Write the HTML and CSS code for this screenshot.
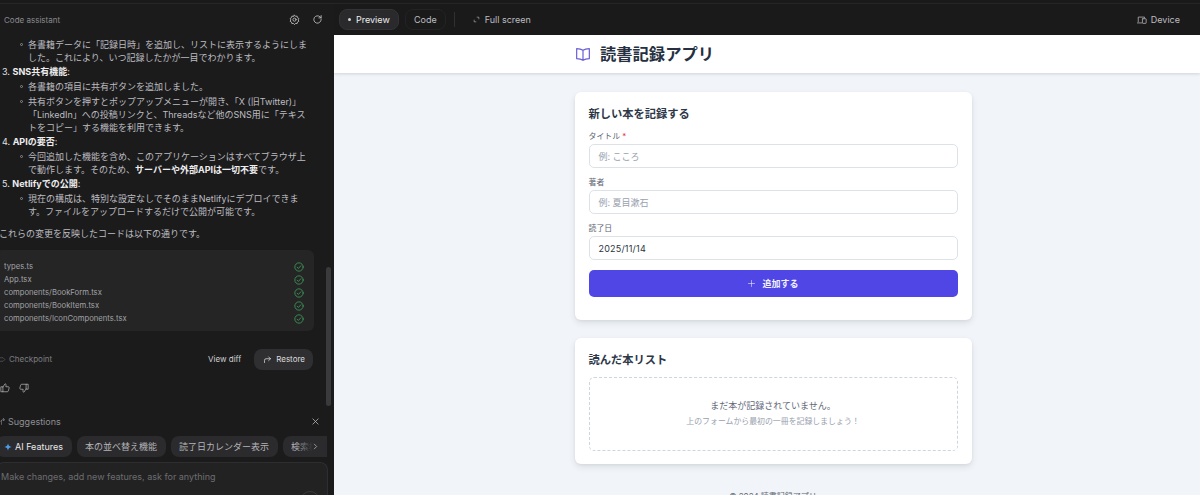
FILE: index.html
```html
<!DOCTYPE html>
<html lang="ja">
<head>
    <meta charset="UTF-8">
    <title>Code assistant</title>
    <link rel="stylesheet" href="styles.css">
</head>
<body>
<div class="app">
    <!-- left side: assistant chat -->
    <aside class="chat">
        <div class="chat-head">
            <span class="chat-title">Code assistant</span>
            <svg class="head-icon gear" viewBox="0 0 24 24"><path d="M12 2.500l2.300 2.600 3.400-.4.800 3.300 3 1.700-1.400 3.100 1.400 3.100-3 1.700-.8 3.300-3.400-.4-2.300 2.600-2.300-2.600-3.400.4-.8-3.300-3-1.700 1.400-3.100-1.400-3.100 3-1.700.8-3.300 3.400.4z"/><circle cx="12" cy="12.300" r="3.500"/></svg>
            <svg class="head-icon" viewBox="0 0 24 24"><path d="M20 12a8 8 0 1 1-2.500-5.800L20 8.500"/><path d="M20 3.500v5h-5"/></svg>
        </div>
        <div class="chat-body">
            <ul class="sub">
                <li>各書籍データに「記録日時」を追加し、リストに表示するようにしました。これにより、いつ記録したかが一目でわかります。</li>
            </ul>
            <p class="step">3. <b>SNS共有機能</b>:</p>
            <ul class="sub">
                <li>各書籍の項目に共有ボタンを追加しました。</li>
                <li>共有ボタンを押すとポップアップメニューが開き、「X (旧Twitter)」「LinkedIn」への投稿リンクと、Threadsなど他のSNS用に「テキストをコピー」する機能を利用できます。</li>
            </ul>
            <p class="step">4. <b>APIの要否</b>:</p>
            <ul class="sub">
                <li>今回追加した機能を含め、このアプリケーションはすべてブラウザ上で動作します。そのため、<b>サーバーや外部APIは一切不要</b>です。</li>
            </ul>
            <p class="step">5. <b>Netlifyでの公開</b>:</p>
            <ul class="sub">
                <li>現在の構成は、特別な設定なしでそのままNetlifyにデプロイできます。ファイルをアップロードするだけで公開が可能です。</li>
            </ul>
            <p class="outro">これらの変更を反映したコードは以下の通りです。</p>
            <div class="files">
                <div class="file"><span>types.ts</span><svg class="check" viewBox="0 0 24 24"><circle cx="12" cy="12" r="10"/><path d="M7.500 12.500l3 3 6-6.500"/></svg></div>
                <div class="file"><span>App.tsx</span><svg class="check" viewBox="0 0 24 24"><circle cx="12" cy="12" r="10"/><path d="M7.500 12.500l3 3 6-6.500"/></svg></div>
                <div class="file"><span>components/BookForm.tsx</span><svg class="check" viewBox="0 0 24 24"><circle cx="12" cy="12" r="10"/><path d="M7.500 12.500l3 3 6-6.500"/></svg></div>
                <div class="file"><span>components/BookItem.tsx</span><svg class="check" viewBox="0 0 24 24"><circle cx="12" cy="12" r="10"/><path d="M7.500 12.500l3 3 6-6.500"/></svg></div>
                <div class="file"><span>components/IconComponents.tsx</span><svg class="check" viewBox="0 0 24 24"><circle cx="12" cy="12" r="10"/><path d="M7.500 12.500l3 3 6-6.500"/></svg></div>
            </div>
            <div class="checkpoint">
                <span class="cp-label"><svg class="cp-icon" viewBox="0 0 24 24"><path d="M2 6h12l6 6-6 6H2"/></svg>Checkpoint</span>
                <span class="view-diff">View diff</span>
                <span class="restore"><svg class="restore-icon" viewBox="0 0 24 24"><path d="M4 20v-6a4 4 0 0 1 4-4h12"/><path d="M15 5l5 5-5 5"/></svg>Restore</span>
            </div>
            <div class="thumbs">
                <svg viewBox="0 0 24 24"><path d="M7 10v11H2V10zM7 10l5-8c2 0 3 1.500 2.500 3.500L14 9h6c1.500 0 2.500 1.500 2 3l-2 7c-.3 1.200-1.200 2-2.500 2H7"/></svg>
                <svg viewBox="0 0 24 24"><path d="M17 14V3h5v11zM17 14l-5 8c-2 0-3-1.500-2.500-3.500L10 15H4c-1.500 0-2.500-1.500-2-3l2-7c.3-1.200 1.200-2 2.500-2H17"/></svg>
            </div>
        </div>
        <div class="suggest-head">
            <svg class="spark" viewBox="0 0 24 24"><path d="M12 8v14M8 12l4-4"/><path d="M19 2l1 3 3 1-3 1-1 3-1-3-3-1 3-1z"/></svg>
            <span>Suggestions</span>
            <svg class="close" viewBox="0 0 24 24"><path d="M5 5l14 14M19 5L5 19"/></svg>
        </div>
        <div class="chips">
            <span class="chip chip-ai"><svg class="diamond" viewBox="0 0 24 24"><path d="M12 1c1 7 4 10 11 11-7 1-10 4-11 11-1-7-4-10-11-11 7-1 10-4 11-11z"/></svg>AI Features</span>
            <span class="chip">本の並べ替え機能</span>
            <span class="chip">読了日カレンダー表示</span>
            <span class="chip">検索機能</span>
            <span class="chips-more"><svg viewBox="0 0 24 24"><path d="M8 4l8 8-8 8"/></svg></span>
        </div>
        <div class="composer">Make changes, add new features, ask for anything<span class="send"></span></div>
    </aside>

    <!-- right side: preview -->
    <main class="stage">
        <div class="toolbar">
            <span class="tab tab-on"><i class="dot"></i>Preview</span>
            <span class="tab">Code</span>
            <span class="bar-sep"></span>
            <span class="fullscreen"><svg viewBox="0 0 24 24"><path d="M4 14v6h6M20 10V4h-6"/></svg>Full screen</span>
            <span class="device"><svg viewBox="0 0 24 24"><path d="M3 16V5h15v2M1 19h10"/><rect x="13" y="9" width="9" height="11" rx="1"/></svg>Device</span>
        </div>
        <div class="preview">
            <header class="site-head">
                <div class="site-inner">
                    <svg class="book" viewBox="0 0 24 24"><path d="M12 6.500C10 5 7 4 2.500 4v15c4.500 0 7.500 1 9.500 2.500 2-1.500 5-2.500 9.500-2.500V4C17 4 14 5 12 6.500zM12 6.500v15"/></svg>
                    <h1>読書記録アプリ</h1>
                </div>
            </header>
            <div class="content">
                <section class="card card-form">
                    <h2>新しい本を記録する</h2>
                    <label class="field-label">タイトル <em>*</em></label>
                    <div class="input ph">例: こころ</div>
                    <label class="field-label">著者</label>
                    <div class="input ph">例: 夏目漱石</div>
                    <label class="field-label">読了日</label>
                    <div class="input date">2025/11/14</div>
                    <div class="add-btn"><svg viewBox="0 0 24 24"><path d="M12 4v16M4 12h16"/></svg>追加する</div>
                </section>
                <section class="card card-list">
                    <h2>読んだ本リスト</h2>
                    <div class="empty">
                        <p class="empty-main">まだ本が記録されていません。</p>
                        <p class="empty-sub">上のフォームから最初の一冊を記録しましょう！</p>
                    </div>
                </section>
                <footer class="site-foot">© 2024 読書記録アプリ</footer>
            </div>
        </div>
    </main>
</div>
</body>
</html>
```

FILE: styles.css
```css
*{
    box-sizing: border-box;
}
html,body{
    margin: 0;
    height: 495px;
    overflow: hidden;
}
body{
    font-family: "Inter", "Noto Sans CJK JP", sans-serif;
    background: #1a1a1b;
}
p,h1,h2,ul{
    margin: 0;
    padding: 0;
}
svg{
    fill: none;
    stroke: currentColor;
    stroke-width: 2;
    stroke-linecap: round;
    stroke-linejoin: round;
    flex: none;
}
.app{
    display: flex;
    height: 495px;
    padding-top: 3px;
}

/* chat */
.chat{
    width: 334px;
    flex: none;
    display: flex;
    flex-direction: column;
    background: #1b1b1c;
    border-top: 1px solid #262627;
    overflow: hidden;
}
.chat-head{
    display: flex;
    align-items: center;
    height: 31px;
    padding: 0 11px 0 4px;
    gap: 12px;
    margin-bottom: 3px;
}
.chat-title{
    flex: 1;
    font-size: 8px;
    color: #8a8a8c;
}
.head-icon{
    width: 11px;
    height: 11px;
    color: #c4c4c6;
    stroke-width: 1.800;
}
.chat-body{
    padding-right: 20px;
    font-size: 9px;
    line-height: 13px;
    color: #bdbdc0;
    height: 376px;
    position: relative;
}
.chat-body::after{
    content: "";
    position: absolute;
    right: 3px;
    top: 229px;
    width: 5px;
    height: 139px;
    border-radius: 3px;
    background: #3a3a3c;
}
.chat-body b{
    color: #ededee;
    font-weight: 700;
}
.sub{
    list-style: none;
    padding-left: 28px;
}
.sub li{
    position: relative;
    margin-bottom: 2px;
}
.sub li::before{
    content: "";
    position: absolute;
    left: -8px;
    top: 5px;
    width: 3px;
    height: 3px;
    box-sizing: border-box;
    border: 0.800px solid #8a8a8c;
    border-radius: 50%;
}
.step{
    padding-left: 2px;
    color: #e0e0e2;
    margin-top: -1px;
    margin-bottom: 2px;
}
.outro{
    margin-top: 8.500px;
    margin-left: -1px;
}
.files{
    margin: 10px 0 0 -4px;
    width: 318px;
    height: 81px;
    background: #252526;
    border-radius: 6px;
    padding: 11px 10px 0 8px;
}
.file{
    display: flex;
    justify-content: space-between;
    align-items: center;
    height: 12.900px;
    font-size: 7.700px;
    color: #a2a2a5;
}
.check{
    width: 10px;
    height: 10px;
    color: #43a862;
    stroke-width: 1.800;
}
.checkpoint{
    display: flex;
    align-items: center;
    margin-top: 18px;
    height: 21px;
    font-size: 8px;
    width: 313px;
}
.cp-label{
    flex: 1;
    display: flex;
    align-items: center;
    gap: 3px;
    color: #7d7d80;
    margin-left: -1px;
}
.cp-icon{
    width: 7px;
    height: 7px;
    stroke-width: 1.600;
}
.view-diff{
    color: #cfcfd1;
    margin-right: 13px;
}
.restore{
    display: flex;
    align-items: center;
    gap: 4px;
    height: 21px;
    padding: 0 8px 0 9px;
    border-radius: 8px;
    background: #2f2f31;
    color: #dcdcde;
}
.restore-icon{
    width: 9px;
    height: 9px;
}
.thumbs{
    display: flex;
    gap: 9px;
    margin-top: 13px;
    color: #c4c4c6;
}
.thumbs svg{
    width: 10px;
    height: 10px;
    stroke-width: 1.600;
}
.suggest-head{
    display: flex;
    align-items: center;
    gap: 3px;
    height: 14px;
    font-size: 9px;
    color: #8f8f92;
    padding-right: 14px;
}
.suggest-head span{
    flex: 1;
}
.spark{
    width: 7px;
    height: 9px;
    margin-left: -2px;
}
.close{
    width: 9px;
    height: 9px;
    color: #bdbdc0;
}
.chips{
    display: flex;
    gap: 5px;
    margin-top: 8px;
    margin-left: -4px;
    height: 21px;
    width: 331px;
    overflow: hidden;
    position: relative;
}
.chip{
    display: flex;
    align-items: center;
    flex: none;
    height: 21px;
    padding: 0 8.500px;
    border-radius: 8px;
    background: #2b2b2d;
    font-size: 9px;
    color: #b4b4b7;
}
.chip-ai{
    gap: 3px;
    color: #e8e8ea;
    padding-left: 8px;
}
.diamond{
    width: 8px;
    height: 8px;
    fill: #4d9be8;
    stroke: none;
}
.chips-more{
    position: absolute;
    right: 0;
    top: 0;
    width: 32px;
    height: 21px;
    display: flex;
    align-items: center;
    justify-content: flex-end;
    padding-right: 8px;
    color: #dcdcde;
    background: linear-gradient(to right, rgba(43,43,45,0), #2b2b2d 55%);
}
.chips-more svg{
    width: 7px;
    height: 7px;
}
.composer{
    flex: 1;
    margin: 5px 6px 0 -4px;
    border: 1px solid #2e2e30;
    border-bottom: 0;
    border-radius: 8px 8px 0 0;
    background: #222223;
    padding: 8px 4px;
    font-size: 9px;
    color: #6d6d70;
    position: relative;
}
.send{
    position: absolute;
    right: 7px;
    top: 28px;
    width: 20px;
    height: 20px;
    border: 1px solid #3a3a3c;
    border-radius: 50%;
}

/* preview */
.stage{
    flex: 1;
    display: flex;
    flex-direction: column;
    min-width: 0;
}
.toolbar{
    display: flex;
    align-items: center;
    gap: 6px;
    height: 32px;
    padding: 0 20px 0 5px;
    background: #1a1a1b;
    border-top: 1px solid #262627;
    font-size: 9px;
    color: #bdbdc0;
}
.tab{
    display: flex;
    align-items: center;
    gap: 5px;
    height: 21px;
    padding: 0 8px;
    border-radius: 8px;
    border: 1px solid #232324;
}
.tab-on{
    background: #2a2a2c;
    border-color: #333335;
    color: #eeeeef;
    width: 60px;
}
.dot{
    width: 3px;
    height: 3px;
    border-radius: 50%;
    background: #d4d4d6;
}
.bar-sep{
    width: 1px;
    height: 15px;
    background: #303032;
    margin: 0 4px 0 2px;
}
.fullscreen{
    display: flex;
    align-items: center;
    gap: 5px;
    flex: 1;
    margin-left: 8px;
}
.fullscreen svg{
    width: 7px;
    height: 7px;
}
.device{
    display: flex;
    align-items: center;
    gap: 4px;
}
.device svg{
    width: 10px;
    height: 10px;
    stroke-width: 1.800;
}
.preview{
    flex: 1;
    min-height: 0;
    background: #f1f5f9;
    overflow: hidden;
}
.site-head{
    height: 38px;
    background: #fff;
    box-shadow: 0 1px 3px rgba(15,23,42,0.15);
}
.site-inner{
    display: flex;
    align-items: center;
    gap: 9px;
    width: 398px;
    height: 100%;
    margin: 0 auto;
    transform: translateX(7px);
}
.book{
    width: 16px;
    height: 16px;
    color: #6a5fd6;
    stroke-width: 1.800;
}
h1{
    font-size: 16.300px;
    line-height: 38px;
    font-weight: 700;
    color: #263040;
}
.content{
    width: 397px;
    margin: 19px auto 0;
    transform: translateX(6px);
}
.card{
    background: #fff;
    border-radius: 6px;
    padding: 14px 14px 13px;
    box-shadow: 0 3px 7px rgba(15,23,42,0.09), 0 1px 3px rgba(15,23,42,0.06);
}
.card-form{
    height: 228px;
}
.card-list{
    height: 126px;
    margin-top: 18px;
}
h2{
    font-size: 11.250px;
    line-height: 16px;
    font-weight: 700;
    color: #2d3748;
}
.field-label{
    display: block;
    font-size: 7.900px;
    line-height: 12px;
    color: #5b6472;
    margin: 7px 0 2px;
}
.field-label:first-of-type{
    margin-top: 8px;
}
.field-label em{
    color: #e0364a;
    font-style: normal;
}
.input{
    display: flex;
    align-items: center;
    height: 24px;
    padding: 0 9px;
    background: #fff;
    border: 1px solid #dde2e9;
    border-radius: 5px;
    font-size: 9px;
    color: #2b3441;
    margin-bottom: 8px;
}
.ph{
    color: #99a1ae;
}
.date{
    letter-spacing: 0.200px;
}
.add-btn{
    display: flex;
    align-items: center;
    justify-content: center;
    gap: 6px;
    height: 27px;
    margin-top: 10px;
    background: #4f46e5;
    border-radius: 5px;
    font-size: 9px;
    font-weight: 600;
    color: #f2f2ff;
}
.add-btn svg{
    width: 9px;
    height: 9px;
    stroke-width: 1.500;
}
.empty{
    display: flex;
    flex-direction: column;
    align-items: center;
    justify-content: center;
    height: 74px;
    margin-top: 9px;
    padding-bottom: 2px;
    border: 1px dashed #cfd5dd;
    border-radius: 5px;
}
.empty-main{
    font-size: 9px;
    line-height: 14px;
    color: #5f6878;
}
.empty-sub{
    font-size: 7.900px;
    line-height: 12px;
    margin-top: 2px;
    color: #99a1ae;
}
.site-foot{
    margin-top: 26px;
    text-align: center;
    font-size: 8px;
    color: #5f6878;
}
```
